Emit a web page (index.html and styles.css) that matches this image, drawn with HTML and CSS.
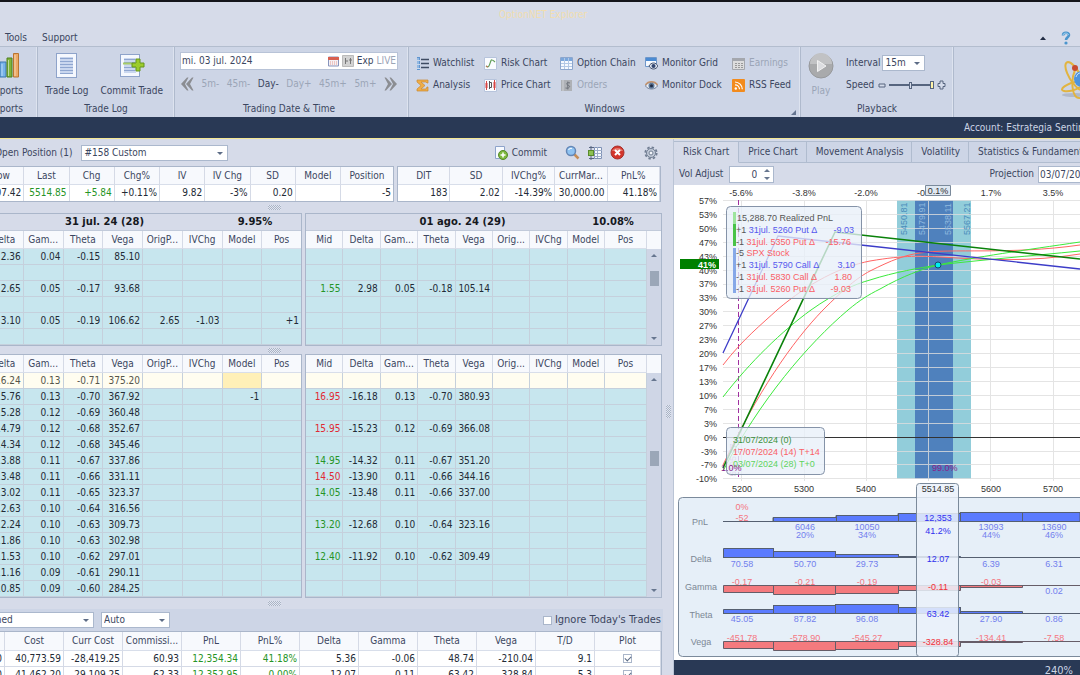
FILE: index.html
```html
<!DOCTYPE html>
<html lang="en">
<head>
<meta charset="utf-8">
<title>OptionNET Explorer</title>
<link rel="stylesheet" href="styles.css">
</head>
<body>
<header class="titlebar">
  <h1 class="app-title">OptionNET Explorer</h1>
  <nav class="menu">
    <a href="#tools">Tools</a><a href="#support">Support</a>
    <span class="menu-right">
      <button class="plain" aria-label="Collapse ribbon"><svg width="8" height="6"><path d="M1 5L4 1.500L7 5Z" fill="#222c44"/></svg></button>
      <button class="plain" aria-label="Help"><svg width="10" height="14"><path d="M2 4.500C2 1 8 1 8 4C8 6.200 5 6.300 5 9" fill="none" stroke="#4b95cd" stroke-width="2.600"/><path d="M2 4C2.500 1.500 7 1.500 7.500 4" fill="none" stroke="#a7d4f0"/><circle cx="5" cy="12" r="1.600" fill="#4b95cd"/></svg></button>
    </span>
  </nav>
</header>
<section class="ribbon">
  <div class="group g-reports">
    <div class="group-body"><button class="big"><svg width="28" height="28"><path d="M2 13h6v12H2z" fill="#d8a0a0" stroke="#955"/><path d="M8 10h6v15H8z" fill="#77b3ea" stroke="#3c77ae"/><path d="M15 6h5v19h-5z" fill="#7eb53a" stroke="#4f7f20"/><path d="M21.500 1.500h5v23.500h-5z" fill="#edaa66" stroke="#b97430"/><path d="M23 3v21M16.500 8v16M10 12v12" stroke="#fff" opacity=".5"/></svg><span>Reports</span></button></div>
    <div class="group-name">Reports</div>
  </div>
  <div class="group g-log">
    <div class="group-body">
      <button class="big"><svg width="28" height="28"><rect x="3.500" y="1.500" width="20" height="24" fill="#f5f8fe" stroke="#8ea3ca"/><path d="M7 5h13v17H7z" fill="#c9d6ee"/><path d="M7 6.500h13M7 9.500h13M7 12.500h13M7 15.500h13M7 18.500h13M7 21.500h13" stroke="#8fa6d0"/></svg><span>Trade Log</span></button>
      <button class="big"><svg width="28" height="28"><rect x="2.500" y="2.500" width="19" height="22" fill="#f5f8fe" stroke="#8ea3ca"/><path d="M6 6h12v15H6z" fill="#cad7ef"/><path d="M6 7.500h11M6 10.500h11M6 15.500h11M6 18.500h11" stroke="#8fa6d0"/><path d="M5 11.500h9" stroke="#a7cc68" stroke-width="2"/><path d="M18 7h4v4h4v4h-4v4h-4v-4h-4v-4h4z" fill="#9ccc2c" stroke="#64951c"/></svg><span>Commit Trade</span></button>
    </div>
    <div class="group-name">Trade Log</div>
  </div>
  <div class="group g-date">
    <div class="group-body column">
      <div class="datebox"><input aria-label="Trading date" value="mi. 03 jul. 2024">
        <svg width="11" height="11"><path d="M.5 1h10v9H.5z" fill="#f4f0f4" stroke="#8794bd"/><path d="M0 1h11v3H0z" fill="#d86050"/><path d="M2 6h7M2 8h7" stroke="#e59a91" stroke-dasharray="1 1"/></svg>
        <svg width="12" height="12"><path d="M.5.500h11v11H.5z" fill="#d2d2d2" stroke="#bbb"/><path d="M3.500 3v6M3 6h3M8.500 3v6M7 5h3" stroke="#777"/></svg>
        <button class="plain">Exp</button><button class="plain" disabled>LIVE</button></div>
      <div class="steps">
        <button class="plain" aria-label="Back"><svg width="14" height="14"><path d="M7 .5L1 7l6 6.500h1.500L5 7 8.500.500zM12 .5L6 7l6 6.500h1.500L10 7 13.500.500z" fill="#8b8d92"/></svg></button>
        <button class="plain" disabled>5m-</button><button class="plain" disabled>45m-</button><button class="plain">Day-</button><button class="plain" disabled>Day+</button><button class="plain" disabled>45m+</button><button class="plain" disabled>5m+</button>
        <button class="plain" aria-label="Forward"><svg width="14" height="14"><path d="M7 .5L13 7l-6 6.500H5.500L9 7 5.500.500zM2 .5L8 7l-6 6.500H.5L4 7 .5.500z" fill="#8b8d92"/></svg></button>
      </div>
    </div>
    <div class="group-name">Trading Date &amp; Time</div>
  </div>
  <div class="group g-windows">
    <div class="group-body windows">
      <button class="item"><svg width="13" height="13"><path d="M5 2.500h8M5 6.500h8M5 10.500h8" stroke="#3f4c63" stroke-width="1.300"/><path d="M2.500 0v13" stroke="#5f94cf" stroke-width="3" stroke-dasharray="3 1"/><path d="M2 1v11" stroke="#c5dcf5"/></svg>Watchlist</button>
      <button class="item"><svg width="13" height="13"><path d="M.5.500h12v12H.5z" fill="#fafcff" stroke="#b7c4dc"/><path d="M2 9c4 4 4-7 6-6 1 0 2 1 3 2" fill="none" stroke="#65a05d" stroke-width="1.200"/><path d="M2 9l2 1" stroke="#d16b5c"/></svg>Risk Chart</button>
      <button class="item"><svg width="13" height="13"><path d="M.5.500h12v12H.5z" fill="#f5f9ff" stroke="#8ca6cd"/><path d="M1 1h11v3H1z" fill="#7ba7dc"/><path d="M1 6.500h11M1 9.500h11M4.500 1v11M8.500 1v11" stroke="#b2c8e6"/></svg>Option Chain</button>
      <button class="item"><svg width="13" height="13"><path d="M.5.500h11v9H.5z" fill="#f5f9ff" stroke="#6f97c9"/><path d="M1 1h10v3H1z" fill="#4b8bd3"/><path d="M4 9c2-4 7-4 9 0-2 4-7 4-9 0z" fill="#dce3ee" stroke="#4a5670"/><circle cx="8.500" cy="9" r="2" fill="#32466f"/></svg>Monitor Grid</button>
      <button class="item" disabled><svg width="13" height="13"><path d="M.5 1.500h12v11H.5z" fill="#ddd" stroke="#a4a7ad"/><path d="M0 1h13v3H0z" fill="#a4a7ad"/><path d="M3 6.500h8M3 8.500h8M3 10.500h8" stroke="#999" stroke-dasharray="2 1"/></svg>Earnings</button>
      <button class="item"><svg width="13" height="13"><path d="M1 1h11v3h-1L10 3H5l4 3.500L5 10h5l1-2h1v4H1v-2l4-3.500L1 3z" fill="#efad46" stroke="#c88a34" stroke-width=".7"/></svg>Analysis</button>
      <button class="item"><svg width="13" height="13"><path d="M.5.500h12v12H.5z" fill="#fafcff" stroke="#b7c4dc"/><path d="M2.500 2v9M10.500 1v10" stroke="#d64646"/><path d="M1.500 4h2v5h-2zM9.500 3h2v6h-2z" fill="#d64646"/><path d="M5.500 2v8M5.500 3.500h2v5h-2" stroke="#555" fill="none"/></svg>Price Chart</button>
      <button class="item" disabled><svg width="13" height="13"><path d="M1 1h11v11H1z" fill="#aeb1b6"/><path d="M3 1v11" stroke="#d0d2d6"/><path d="M10 4c-4-1.500-4 2-1.500 2.500S9 10 5.500 9M7.800 2.500v8" fill="none" stroke="#70747c"/></svg>Orders</button>
      <button class="item"><svg width="13" height="13"><path d="M.5 7C3 2 10 2 12.500 7 10 11 3 11 .5 7z" fill="#edf0f5" stroke="#74819a"/><path d="M.5 6C3 1.500 10 1.500 12.500 6" fill="none" stroke="#c4936c" stroke-width="1.500"/><circle cx="6.500" cy="6.800" r="3" fill="#5d7899"/><circle cx="6.500" cy="6.800" r="1.500" fill="#222c44"/></svg>Monitor Dock</button>
      <button class="item"><svg width="13" height="13"><rect width="13" height="13" rx="1" fill="#f28b1d"/><circle cx="3.800" cy="9.500" r="1.200" fill="#fff"/><path d="M3 5.800a4.500 4.500 0 0 1 4.500 4.500M3 3a7.500 7.500 0 0 1 7.300 7.300" fill="none" stroke="#fff" stroke-width="1.200"/></svg>RSS Feed</button>
    </div>
    <div class="group-name">Windows<svg class="launcher" width="5" height="5"><path d="M5 0v5H0z" fill="#64748f"/></svg></div>
  </div>
  <div class="group g-play">
    <div class="group-body">
      <button class="big" disabled><svg width="26" height="28"><circle cx="13" cy="14" r="12" fill="#a9aaac" stroke="#97999c"/><path d="M2 12a11 11 0 0 1 22 0z" fill="#c1c2c4"/><path d="M9.500 8.500l8.500 5.500-8.500 5.500z" fill="#dcdde0" stroke="#f2f2f2"/></svg><span>Play</span></button>
      <div class="play-opts">
        <label>Interval<span class="select interval"><select><option>15m</option></select></span></label>
        <label>Speed<svg width="68" height="10"><path d="M1 4h6v3H1zM62 1h3v2.500h2v3h-2V9h-3V6.500h-2v-3h2z" fill="#d5dceb" stroke="#56657f"/><path d="M11 5h43" stroke="#56657f" stroke-width="2"/><rect x="31.500" y="2.500" width="2" height="6" fill="#d5dceb" stroke="#56657f"/><rect x="52.500" y="1.500" width="3" height="7" fill="#fff3a8" stroke="#56657f"/></svg><input class="hidden-range" type="range" value="100"></label>
      </div>
    </div>
    <div class="group-name">Playback</div>
  </div>
  <div class="brand"><svg width="20" height="42"><ellipse cx="15" cy="35" rx="13" ry="2" fill="#9ea6b8" opacity=".6"/><g fill="none" stroke="#e2b440" stroke-width="2"><path d="M20 30C9 22 1 3 8 2c4 0 8 6 12 12"/><path d="M20 21C6 23-2 30 4 31c5 1 12-1 16-4"/><path d="M15 10c-4 9-4 29 5 28"/></g><circle cx="22" cy="19" r="8" fill="#4e94de"/><path d="M16 17c1-3 3-4 4-4" stroke="#cae4fb" fill="none"/><circle cx="15" cy="8" r="3" fill="#c84b2f"/></svg></div>
</section>
<div class="account"><span>Account: Estrategia Sentinel</span></div>
<main class="work">
  <section class="left">
    <div class="position-bar">
      <label>Open Position (1)<span class="select position"><select><option>#158 Custom</option></select></span></label>
      <div class="tools">
        <button class="item"><svg width="13" height="14"><path d="M.5.500h9v12h-9z" fill="#f7faff" stroke="#8ea3ca"/><circle cx="8" cy="9" r="4.500" fill="#7eb93f" stroke="#56892b"/><path d="M8 6.500v5M5.500 9h5" stroke="#fff" stroke-width="1.500"/></svg>Commit</button>
        <button class="plain" aria-label="Search"><svg width="15" height="15"><path d="M9 9l4.500 4.500" stroke="#c48d58" stroke-width="2.500"/><circle cx="6" cy="6" r="4.500" fill="#8fc3f2" stroke="#6487b6" stroke-width="1.500"/><path d="M3.500 5C4 3.500 6 3 7 3.500" stroke="#fff" fill="none"/></svg></button>
        <button class="plain" aria-label="Columns"><svg width="14" height="14"><path d="M6.500 1.500h7v11h-7z" fill="#f6f9fd" stroke="#7e91b5"/><path d="M6 4.500h8M6 7.500h8M6 10.500h8M9.500 1v11" stroke="#9dadc9"/><path d="M3 0v14M1 1.500h5M1 12.500h5" stroke="#566580"/><rect x=".5" y="4.500" width="5" height="5" fill="#8cc152" stroke="#598a2c"/></svg></button>
        <button class="plain" aria-label="Close position"><svg width="15" height="15"><circle cx="7.500" cy="7.500" r="6.500" fill="#d3352c" stroke="#a7302b"/><path d="M2 6a6 5 0 0 1 11 0z" fill="#e5796f"/><path d="M5 5l5 5M10 5l-5 5" stroke="#fff" stroke-width="2"/></svg></button>
        <button class="plain gear" aria-label="Settings"><svg width="14" height="14"><circle cx="7" cy="7" r="5.700" fill="none" stroke="#707d92" stroke-width="1.800" stroke-dasharray="2.400 2.070"/><circle cx="7" cy="7" r="4.500" fill="#c2cad8" stroke="#707d92"/><circle cx="7" cy="7" r="2" fill="#f2f5fa" stroke="#707d92"/></svg></button>
      </div>
    </div>
    <div class="summary">
      <div class="pane clip"><table class="quote"><thead><tr><th>Low<th>Last<th>Chg<th>Chg%<th>IV<th>IV Chg<th>SD<th>Model<th class="w-pos">Position</thead><tbody><tr><td>5507.42<td class="up">5514.85<td class="up">+5.84<td>+0.11%<td>9.82<td>-3%<td>0.20<td><td>-5</tbody></table></div>
      <div class="pane stats"><table><thead><tr><th>DIT<th>SD<th>IVChg%<th>CurrMar...<th>PnL%</thead><tbody><tr><td>183<td>2.02<td>-14.39%<td>30,000.00<td>41.18%</tbody></table></div>
    </div>
    <div class="grip"></div>
    <div class="chains">
      <div class="pane chain-a">
        <div class="expiry"><b class="exp-date">31 jul. 24 (28)</b><b class="exp-iv">9.95%</b></div>
        <table class="chain"><thead><tr><th>Delta<th>Gam...<th>Theta<th>Vega<th>OrigP...<th>IVChg<th>Model<th>Pos</thead><tbody>
          <tr><td>2.36<td>0.04<td>-0.15<td>85.10<td><td><td><td>
          <tr><td><td><td><td><td><td><td><td>
          <tr><td>2.65<td>0.05<td>-0.17<td>93.68<td><td><td><td>
          <tr><td><td><td><td><td><td><td><td>
          <tr><td>3.10<td>0.05<td>-0.19<td>106.62<td>2.65<td>-1.03<td><td>+1
          <tr><td><td><td><td><td><td><td><td>
        </tbody></table>
      </div>
      <div class="pane chain-b">
        <div class="expiry"><b class="exp-date">01 ago. 24 (29)</b><b class="exp-iv">10.08%</b></div>
        <div class="scroller"><table class="chain"><thead><tr><th>Mid<th>Delta<th>Gam...<th>Theta<th>Vega<th>Orig...<th>IVChg<th>Model<th class="w-last">Pos</thead><tbody>
          <tr><td><td><td><td><td><td><td><td><td>
          <tr><td><td><td><td><td><td><td><td><td>
          <tr><td class="up">1.55<td>2.98<td>0.05<td>-0.18<td>105.14<td><td><td><td>
          <tr><td><td><td><td><td><td><td><td><td>
          <tr><td><td><td><td><td><td><td><td><td>
          <tr><td><td><td><td><td><td><td><td><td>
        </tbody></table>
        <div class="scrollbar"><i class="corner"></i><i class="arrow-up"></i><i class="thumb near"></i><i class="arrow-down"></i></div></div>
      </div>
    </div>
    <div class="grip tight"></div>
    <div class="chains">
      <div class="pane chain-a">
        <table class="chain"><thead><tr><th>Delta<th>Gam...<th>Theta<th>Vega<th>OrigP...<th>IVChg<th>Model<th>Pos</thead><tbody>
          <tr class="current"><td>-16.24<td>0.13<td>-0.71<td>375.20<td><td><td class="focus"><td>
          <tr><td>-15.76<td>0.13<td>-0.70<td>367.92<td><td><td>-1<td>
          <tr><td>-15.28<td>0.12<td>-0.69<td>360.48<td><td><td><td>
          <tr><td>-14.79<td>0.12<td>-0.68<td>352.67<td><td><td><td>
          <tr><td>-14.34<td>0.12<td>-0.68<td>345.46<td><td><td><td>
          <tr><td>-13.88<td>0.11<td>-0.67<td>337.86<td><td><td><td>
          <tr><td>-13.48<td>0.11<td>-0.66<td>331.11<td><td><td><td>
          <tr><td>-13.02<td>0.11<td>-0.65<td>323.37<td><td><td><td>
          <tr><td>-12.63<td>0.10<td>-0.64<td>316.56<td><td><td><td>
          <tr><td>-12.24<td>0.10<td>-0.63<td>309.73<td><td><td><td>
          <tr><td>-11.86<td>0.10<td>-0.63<td>302.98<td><td><td><td>
          <tr><td>-11.53<td>0.10<td>-0.62<td>297.01<td><td><td><td>
          <tr><td>-11.16<td>0.09<td>-0.61<td>290.11<td><td><td><td>
          <tr><td>-10.85<td>0.09<td>-0.60<td>284.25<td><td><td><td>
        </tbody></table>
      </div>
      <div class="pane chain-b">
        <div class="scroller"><table class="chain"><thead><tr><th>Mid<th>Delta<th>Gam...<th>Theta<th>Vega<th>Orig...<th>IVChg<th>Model<th class="w-last">Pos</thead><tbody>
          <tr class="current"><td><td><td><td><td><td><td><td><td>
          <tr><td class="down">16.95<td>-16.18<td>0.13<td>-0.70<td>380.93<td><td><td><td>
          <tr><td><td><td><td><td><td><td><td><td>
          <tr><td class="down">15.95<td>-15.23<td>0.12<td>-0.69<td>366.08<td><td><td><td>
          <tr><td><td><td><td><td><td><td><td><td>
          <tr><td class="up">14.95<td>-14.32<td>0.11<td>-0.67<td>351.20<td><td><td><td>
          <tr><td class="down">14.50<td>-13.90<td>0.11<td>-0.66<td>344.16<td><td><td><td>
          <tr><td class="up">14.05<td>-13.48<td>0.11<td>-0.66<td>337.00<td><td><td><td>
          <tr><td><td><td><td><td><td><td><td><td>
          <tr><td class="up">13.20<td>-12.68<td>0.10<td>-0.64<td>323.16<td><td><td><td>
          <tr><td><td><td><td><td><td><td><td><td>
          <tr><td class="up">12.40<td>-11.92<td>0.10<td>-0.62<td>309.49<td><td><td><td>
          <tr><td><td><td><td><td><td><td><td><td>
          <tr><td><td><td><td><td><td><td><td><td>
        </tbody></table>
        <div class="scrollbar"><i class="corner"></i><i class="arrow-up"></i><i class="thumb mid"></i><i class="arrow-down"></i></div></div>
      </div>
    </div>
    <div class="grip"></div>
    <div class="trade-bar">
      <span class="select combined"><select aria-label="View"><option>Combined</option></select></span>
      <span class="select auto"><select aria-label="Mode"><option>Auto</option></select></span>
      <label class="ignore"><input type="checkbox">Ignore Today's Trades</label>
    </div>
    <div class="pane trades-pane"><table class="trades"><thead><tr><th>Margin<th>Cost<th>Curr Cost<th>Commissi...<th>PnL<th>PnL%<th>Delta<th>Gamma<th>Theta<th>Vega<th>T/D<th class="w-plot">Plot</thead><tbody>
      <tr><td>30,000.00<td>40,773.59<td>-28,419.25<td>60.93<td class="up">12,354.34<td class="up">41.18%<td>5.36<td>-0.06<td>48.74<td>-210.04<td>9.1<td class="plot"><input type="checkbox" checked aria-label="Plot 1">
      <tr><td>30,000.00<td>41,462.20<td>-29,109.25<td>62.33<td class="up">12,352.95<td class="up">0.00%<td>12.07<td>-0.11<td>63.42<td>-328.84<td>5.3<td class="plot"><input type="checkbox" checked aria-label="Plot 2">
    </tbody></table></div>
  </section>
  <div class="splitter"></div>
  <section class="right">
    <nav class="tabs"><button class="active">Risk Chart</button><button>Price Chart</button><button>Movement Analysis</button><button>Volatility</button><button>Statistics &amp; Fundamentals</button></nav>
    <div class="chart-bar">
      <label>Vol Adjust<span class="spin"><input value="0"><i class="arrow-up"></i><i class="arrow-down"></i></span></label>
      <label class="projection">Projection<input value="03/07/2024"></label>
    </div>
    <svg class="chart" viewBox="674 185 406 475" preserveAspectRatio="xMinYMin slice">
      <path d="M897 200h74v279h-74z" fill="#92cdda"/><path d="M915 200h38v279h-38z" fill="#4f81bd"/>
      <g stroke="#dedede" opacity=".8"><path d="M723 200.500h357M723 214.500h357M723 228.500h357M723 242.500h357M723 256.500h357M723 270.500h357M723 284.500h357M723 297.500h357M723 311.500h357M723 325.500h357M723 339.500h357M723 353.500h357M723 367.500h357M723 381.500h357M723 395.500h357M723 409.500h357M723 423.500h357M723 451.500h357M723 464.500h357M723 478.500h357M741.500 200v281M804.500 200v281M866.500 200v281M928.500 200v281M990.500 200v281M1053.500 200v281"/></g>
      <path d="M723 437.500h357" stroke="#333"/>
      <g class="axis" text-anchor="end"><text x="717" y="204">57%</text><text x="717" y="218">53%</text><text x="717" y="232">50%</text><text x="717" y="246">47%</text><text x="717" y="260">43%</text><text x="717" y="274">40%</text><text x="717" y="287">37%</text><text x="717" y="301">33%</text><text x="717" y="315">30%</text><text x="717" y="329">27%</text><text x="717" y="343">23%</text><text x="717" y="357">20%</text><text x="717" y="371">17%</text><text x="717" y="385">13%</text><text x="717" y="399">10%</text><text x="717" y="413">7%</text><text x="717" y="427">3%</text><text x="717" y="441">0%</text><text x="717" y="455">-3%</text><text x="717" y="468">-7%</text><text x="717" y="482">-10%</text></g>
      <path d="M680 259h39v10h-39z" fill="#008000"/><text class="tag" x="716" y="268" text-anchor="end">41%</text>
      <g class="axis" text-anchor="middle"><text x="741" y="196">-5.6%</text><text x="804" y="196">-3.8%</text><text x="866" y="196">-2.0%</text><text x="921" y="196">-0</text><text x="991" y="196">1.7%</text><text x="1053" y="196">3.5%</text>
      <text x="742" y="492">5200</text><text x="804" y="492">5300</text><text x="866" y="492">5400</text><text x="991" y="492">5600</text><text x="1053" y="492">5700</text></g>
      <path d="M925.500 185.500h25v10h-25z" fill="#dfe8f2" stroke="#7b8a9b"/><text class="axis" x="938" y="194" text-anchor="middle">0.1%</text>
      <g class="band-text"><text transform="translate(907 235) rotate(-90)">5450.81</text><text class="inner" transform="translate(925 235) rotate(-90)">5479.91</text><text class="inner" transform="translate(951 235) rotate(-90)">5538.11</text><text transform="translate(970 235) rotate(-90)">5567.21</text></g>
      <path d="M738.500 200v279" stroke="#a030a0" stroke-dasharray="5 3"/>
      <text class="purple faint" transform="translate(736 476) rotate(-90)">5195.27</text>
      <g fill="none">
        <path d="M723 365C743 339 762 324 777 310C810 282 840 267 870 261C905 255 922 256 940 257C990 260 1030 262 1080 254" stroke="#ff6464"/>
        <path d="M723 465C757 393 792 342 823 310C845 288 857 278 870 271C892 260 905 255 920 253C950 248 1010 255 1080 245" stroke="#ff6464"/>
        <path d="M723 397C750 362 782 331 811 310C835 293 855 284 870 280C895 272 919 268 938 265C980 260 1030 256 1080 251" stroke="#3cea3c"/>
        <path d="M723 471C760 400 808 344 848 310C860 300 868 295 880 289C903 276 922 269 938 265C975 257 1025 250 1080 242" stroke="#3cea3c"/>
        <path d="M723 353L778 236L870 246L1080 269" stroke="#3c3cc8" stroke-width="1.300"/>
        <path d="M723 468L835 232L870 236L1080 259" stroke="#0a820a" stroke-width="1.600"/>
      </g>
      <circle cx="938" cy="265" r="3" fill="#00f0f0" stroke="#174a6a"/>
      <text class="purple" x="932" y="471">99.0%</text>
      <rect class="tip" x="726.500" y="206.500" width="135" height="92" rx="4"/>
      <path d="M733 212h3v12h-3z" fill="#9de49d"/><path d="M733 224h3v22h-3z" fill="#48c348"/><path d="M733 248h3v45h-3z" fill="#86a8e8"/>
      <g class="tip-text"><text x="737" y="221">15,288.70 Realized PnL</text>
      <text x="736" y="233">+1 <tspan class="b">31jul. 5260 Put Δ</tspan></text><text class="b" x="854" y="233" text-anchor="end">-9.03</text>
      <text x="736" y="245">-1 <tspan class="r">31jul. 5350 Put Δ</tspan></text><text class="r" x="851" y="245" text-anchor="end">-15.76</text>
      <text x="736" y="256">-5 <tspan class="r">SPX Stock</tspan></text>
      <text x="736" y="268">+1 <tspan class="b">31jul. 5790 Call Δ</tspan></text><text class="b" x="855" y="268" text-anchor="end">3.10</text>
      <text x="736" y="280">-1 <tspan class="r">31jul. 5830 Call Δ</tspan></text><text class="r" x="852" y="280" text-anchor="end">1.80</text>
      <text x="736" y="292">-1 <tspan class="r">31jul. 5260 Put Δ</tspan></text><text class="r" x="851" y="292" text-anchor="end">-9.03</text></g>
      <rect class="tip" x="726.500" y="427.500" width="98" height="47" rx="4"/>
      <g class="tip-text"><text x="733" y="443" fill="#3c913c">31/07/2024 (0)</text><text x="733" y="455" class="r">17/07/2024 (14) T+14</text><text x="733" y="467" fill="#5ed45e">03/07/2024 (28) T+0</text></g>
      <text class="purple" x="721" y="471">1.0%</text>
      <rect x="678.500" y="497.500" width="420" height="159" rx="4" fill="#e6eff8" stroke="#7b8a9b"/>
      <g class="row-name" text-anchor="middle"><text x="700" y="525">PnL</text><text x="701" y="562">Delta</text><text x="701" y="590">Gamma</text><text x="701" y="618">Theta</text><text x="701" y="645">Vega</text></g>
      <g fill="#5b7bff" stroke="#555f70"><path d="M723 521.500h50v-4h63v-2h62v-2h62v-1h120v9zM773.500 517v4M836.500 515v6M898.500 513v8M960.500 512v9M1022.500 512v9"/><path d="M723.500 557.500v-9h50v3h62v3h63v2h62v1h120M723 557.500h357M773.500 548v9M835.500 551v6M898.500 554v3"/><path d="M723.500 613.500v-4h50v-4h62v-1h63v3h62v4h62v2h58M723 613.500h357M773.500 605v8M835.500 604v9M898.500 607v6M960.500 607v6"/></g>
      <g fill="#f47a7e" stroke="#665d68"><path d="M723.500 585.500v7h50v2h62v-1h63v-3h62v-3h62v-2zM773.500 586v8M835.500 586v8M898.500 586v7M960.500 586v4M1022 585.500h58"/><path d="M723.500 641.500v7h50v2h62v-1h63v-3h62v-4h62v-1zM773.500 642v8M835.500 642v8M898.500 642v7M960.500 642v4M1022 641.500h58"/></g>
      <g class="values" text-anchor="middle"><g class="r"><text x="742" y="510">0%</text><text x="742" y="521">-52</text><text x="742" y="585">-0.17</text><text x="805" y="585">-0.21</text><text x="867" y="585">-0.19</text><text x="991" y="585">-0.03</text><text x="742" y="641">-451.78</text><text x="805" y="641">-578.90</text><text x="867" y="641">-545.27</text><text x="991" y="641">-134.41</text><text x="1054" y="641">-7.58</text></g>
      <g class="b"><text x="805" y="530">6046</text><text x="867" y="530">10050</text><text x="991" y="530">13093</text><text x="1054" y="530">13690</text><text x="805" y="538">20%</text><text x="867" y="538">34%</text><text x="991" y="538">44%</text><text x="1054" y="538">46%</text><text x="742" y="567">70.58</text><text x="805" y="567">50.70</text><text x="867" y="567">29.73</text><text x="991" y="567">6.39</text><text x="1054" y="567">6.31</text><text x="1054" y="594">0.02</text><text x="742" y="622">45.05</text><text x="805" y="622">87.82</text><text x="867" y="622">96.08</text><text x="991" y="622">27.90</text><text x="1054" y="622">0.86</text></g></g>
      <rect x="916.500" y="483.500" width="42" height="173" rx="3" fill="#eaf1fa" fill-opacity=".85" stroke="#7b8a9b"/>
      <g class="current-values" text-anchor="middle"><text class="axis" x="938" y="492">5514.85</text><g fill="#3030ee"><text x="938" y="521">12,353</text><text x="938" y="534">41.2%</text><text x="938" y="562">12.07</text><text x="938" y="617">63.42</text></g><g fill="#f03038"><text x="938" y="590">-0.11</text><text x="938" y="645">-328.84</text></g></g>
    </svg>
    <footer class="status">240%</footer>
  </section>
</main>
</body>
</html>
```
FILE: styles.css
```css
* { box-sizing: border-box; }
body { margin: 0; height: 100vh; overflow: hidden; display: flex; flex-direction: column; background: #d6dbe9; color: #3b4660; font: 10px/14px "DejaVu Sans Condensed", "DejaVu Sans", sans-serif; }
button, input, select { font: inherit; color: inherit; }
button { border: 0; background: none; padding: 0; white-space: nowrap; }
button:disabled { color: #9ba5b7; }
input { border: 0; padding: 0; min-width: 0; }
svg { display: block; flex: none; }
label { display: flex; align-items: center; white-space: nowrap; }
.plain { display: flex; align-items: center; }
.titlebar { border-top: 2px solid #15151b; height: 47px; flex: none; border-bottom: 1px solid #b3bdce; display: flex; flex-direction: column; }
.app-title { margin: 5px 0 0 6px; font-size: 10px; line-height: 16px; font-weight: 400; text-align: center; color: #f1deaf; }
.menu { display: flex; align-items: center; gap: 15px; height: 16px; margin-top: 7px; padding: 0 9px 0 5px; }
.menu a { color: inherit; text-decoration: none; }
.menu-right { margin-left: auto; display: flex; align-items: center; gap: 14px; }
.ribbon { display: flex; height: 70px; flex: none; background: #cdd5e6; }
.group { border-right: 1px solid #afbacd; box-shadow: inset -1px 0 #dde3ef; display: flex; flex-direction: column; flex: none; overflow: hidden; }
.group-body { display: flex; height: 54px; padding-top: 5px; flex: none; }
.group-body.column { flex-direction: column; gap: 2px; }
.group-name { text-align: center; line-height: 16px; position: relative; }
.launcher { position: absolute; right: 4px; bottom: 2px; }
.big { display: flex; flex-direction: column; align-items: center; gap: 4px; }
.g-reports { width: 38px; align-items: flex-end; padding-right: 14px; }
.g-log { width: 137px; }
.g-log .group-body { gap: 12px; padding-left: 7px; }
.g-date { width: 234px; padding: 0 10px 0 5px; }
.datebox { display: flex; align-items: center; gap: 3px; height: 18px; background: #fff; border: 1px solid #b8c3d7; padding: 0 1px; }
.datebox input { flex: 1; }
.steps { display: flex; align-items: center; justify-content: space-between; height: 24px; }
.g-windows { width: 392px; }
.windows { display: grid; grid-template-columns: 68px 76px 85px 87px 1fr; grid-auto-rows: 22px; padding-left: 7px; }
.item { display: flex; align-items: center; gap: 4px; text-align: left; }
.g-play { width: 153px; }
.g-play .group-body { padding-left: 7px; gap: 12px; }
.play-opts { display: flex; flex-direction: column; gap: 5px; padding-top: 2px; }
.play-opts label { gap: 2px; height: 17px; }
.play-opts svg { margin-left: 2px; }
.hidden-range { width: 0; opacity: 0; margin: 0; }
.brand { flex: 1; display: flex; justify-content: flex-end; padding-top: 13px; }
.select { position: relative; display: inline-flex; height: 16px; background: #fff; border: 1px solid #abb8cd; }
.select select { appearance: none; border: 0; background: none; width: 100%; padding: 0 2px; line-height: 14px; }
.select::after { content: ""; position: absolute; right: 4px; top: 6px; border: 3px solid transparent; border-top-color: #5d6c86; border-bottom: 0; }
.interval { width: 43px; }
.account { height: 22px; flex: none; background: #293955; border-bottom: 1px solid #f5e792; color: #cdd5e5; display: flex; justify-content: flex-end; align-items: center; overflow: hidden; }
.account span { width: 116px; white-space: nowrap; }
.work { flex: 1; min-height: 0; display: flex; overflow: hidden; }
.left { flex: 0 1 663px; min-width: 0; overflow: hidden; }
.splitter { width: 11px; flex: none; border-right: 1px solid #bac4d5; }
.splitter::before { content: ""; display: block; width: 5px; height: 13px; margin: 266px 0 0 3px; background: repeating-conic-gradient(#aab3c5 0 25%, #e2e7f1 0 50%) 0 0 / 2px 2px; }
.position-bar { display: flex; justify-content: space-between; align-items: center; height: 27px; padding-right: 5px; }
.position-bar label { margin-left: -5px; gap: 9px; }
.position { width: 147px; }
.tools { display: flex; align-items: center; gap: 8px; }
.tools .item { margin-right: 10px; }
.tools .gear { margin-left: 11px; }
.pane { border: 1px solid #aab6ca; background: #fff; overflow: hidden; }
.summary { display: flex; gap: 3px; padding-right: 2px; }
.clip { width: 394px; border-left: 0; }
.quote { margin-left: -21px; width: 415px; }
.stats { flex: 1; }
table { border-collapse: separate; border-spacing: 0; table-layout: fixed; width: 100%; }
th { height: 18px; padding: 0 1px; font-weight: 400; text-align: center; background: #f7f9fd; border-right: 1px solid #d5dae6; border-bottom: 1px solid #d8deea; white-space: nowrap; overflow: hidden; }
td { height: 16px; padding: 0 2px; text-align: right; line-height: 14px; color: #222a35; border-right: 1px solid #d5dae6; white-space: nowrap; }
.w-pos { width: 53px; }
.up { color: #269426; }
.down { color: #e02a34; }
.grip { height: 11px; display: flex; align-items: center; padding-left: 268px; }
.grip::before { content: ""; width: 13px; height: 5px; background: repeating-conic-gradient(#aab3c5 0 25%, #e2e7f1 0 50%) 0 0 / 2px 2px; }
.tight { height: 8px; }
.chains { display: flex; gap: 3px; padding-right: 1px; }
.chain-a { flex: 0 0 302px; border-left: 0; }
.chain-b { flex: 1; min-width: 0; }
.expiry { display: flex; height: 17px; align-items: center; background: #d6dbe9; color: #15181e; border-bottom: 1px solid #c1cada; font-family: "DejaVu Sans", sans-serif; }
.exp-date { flex: 0 0 209px; text-align: center; }
.exp-iv { flex: 1; text-align: center; }
.chain-b .exp-date { flex-basis: 73%; padding-left: 54px; }
.chain td { background: #c7e6ee; border-right-color: #c5d0dc; border-bottom: 1px solid #c5d0dc; }
.chain-a table { margin-left: -16px; width: 318px; }
.chain .current td { background: #fffdf0; color: #55554a; }
.chain .current .focus { background: #fff0b8; }
.w-last { width: 42px; }
.scroller { display: flex; }
.scrollbar { flex: 0 0 14px; background: #cfd6e6; display: flex; flex-direction: column; align-items: center; }
.corner { width: 100%; height: 18px; background: #f7f9fd; }
.arrow-up, .arrow-down { display: block; width: 0; height: 0; border: 3px solid transparent; }
.arrow-up { border-bottom-color: #67768f; border-top: 0; }
.arrow-down { border-top-color: #67768f; border-bottom: 0; }
.scrollbar .arrow-up { margin-top: 5px; }
.scrollbar .arrow-down { margin: auto 0 5px; }
.thumb { width: 9px; height: 15px; background: #9ba7b8; }
.near { margin-top: 14px; }
.mid { margin-top: 70px; }
.trade-bar { display: flex; align-items: center; gap: 7px; height: 22px; background: #cdd5e6; }
.combined { width: 94px; border-left: 0; overflow: hidden; }
.combined select { margin-left: -35px; width: 129px; flex: none; }
.auto { width: 69px; }
.ignore { margin-left: auto; gap: 3px; padding-right: 2px; font-size: 11px; }
input[type="checkbox"] { appearance: none; width: 9px; height: 9px; margin: 0; background: #fff; border: 1px solid #aab6ca; }
input[type="checkbox"]:checked::after { content: ""; display: block; width: 5px; height: 3px; margin: 1px; border: solid #5d6c86; border-width: 0 0 1px 1px; transform: rotate(-45deg); }
.trades-pane { border-left: 0; margin-right: 1px; }
.trades { margin-left: -54px; width: 715px; }
.trades th { height: 19px; }
.trades td { border-bottom: 1px solid #d5dae6; }
.w-plot { width: 66px; }
td.plot { text-align: center; }
.plot input { display: block; margin: 0 auto; }
.right { flex: 1 1 406px; min-width: 0; display: flex; flex-direction: column; overflow: hidden; }
.tabs { display: flex; flex: none; height: 24px; padding-top: 2px; }
.tabs button { flex: none; height: 22px; padding: 0 8px 0 9px; background: #cdd5e6; border: 1px solid #b0bccf; border-width: 1px 1px 1px 0; }
.tabs .active { background: #d6dbe9; border-bottom-color: #d6dbe9; padding-right: 9px; }
.chart-bar { display: flex; justify-content: space-between; height: 22px; flex: none; padding-left: 5px; overflow: hidden; }
.chart-bar label { gap: 4px; }
.spin { position: relative; margin-left: 2px; }
.spin input { width: 45px; height: 17px; border: 1px solid #abb8cd; text-align: right; padding-right: 16px; display: block; }
.spin i { position: absolute; right: 4px; }
.spin .arrow-up { top: 3px; }
.spin .arrow-down { bottom: 3px; }
.projection input { width: 42px; height: 17px; border: 1px solid #abb8cd; border-right: 0; padding-left: 1px; }
.chart { flex: 1; min-height: 0; width: 100%; background: #fff; font: 9px "Liberation Sans", Arial, sans-serif; }
.axis { fill: #333; }
.tag { fill: #fff; font-weight: 700; }
.band-text { fill: #4a8cba; }
.inner { fill: #8fbadf; }
.purple { fill: #8a1c8a; }
.faint { opacity: .5; }
.tip { fill: #e8eff9; fill-opacity: .78; stroke: #8593a8; }
.tip-text { fill: #555; }
.tip-text .b { fill: #5558ee; }
.tip-text .r { fill: #fa6067; }
.row-name { fill: #7c8795; }
.values .r { fill: #f57580; }
.values .b { fill: #7280ee; }
.status { height: 15px; flex: none; background: #293955; color: #cdd5e5; text-align: right; font-size: 11px; padding: 4px 7px 0 0; }
```
